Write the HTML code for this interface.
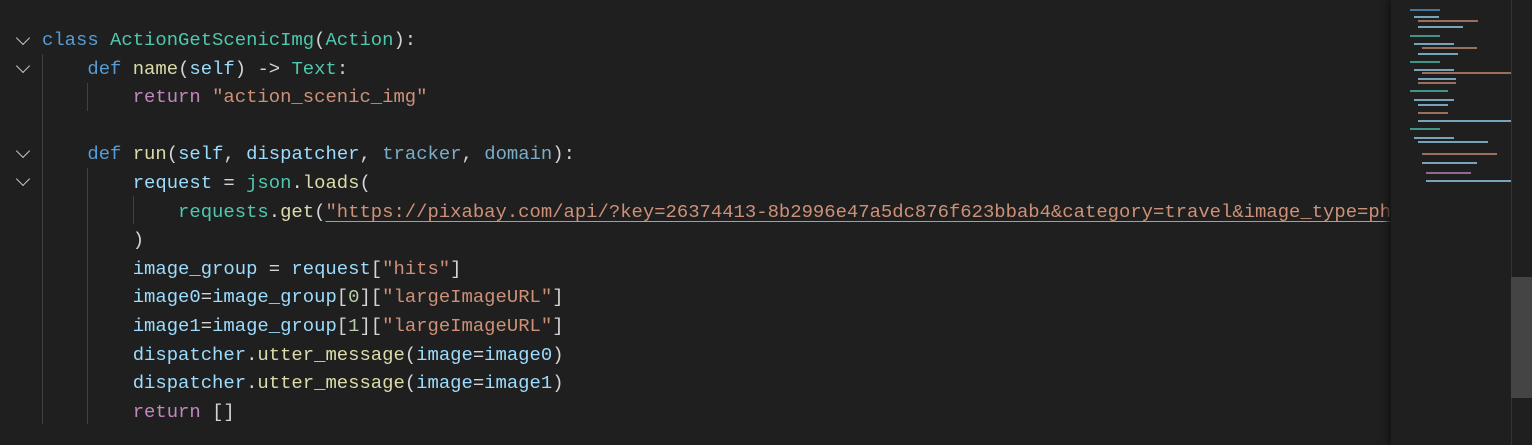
<!DOCTYPE html>
<html><head><meta charset="utf-8"><style>
body{margin:0;width:1532px;height:445px;background:#1f1f1f;overflow:hidden;position:relative;font-family:"Liberation Mono",monospace;}
.code{position:absolute;left:42px;top:26px;font-size:18.9px;line-height:28.6px;white-space:pre;color:#d4d4d4;}
.k{color:#569cd6}.c{color:#4ec9b0}.f{color:#dcdcaa}.v{color:#9cdcfe}.p{color:#9cdcfe;opacity:.75}.r{color:#c586c0}.s{color:#ce9178}.n{color:#b5cea8}
.u{text-decoration:underline;text-decoration-color:#ce9178;text-underline-offset:4px}
.chev{position:absolute;left:18px;width:9px;height:9px;border-right:1.6px solid #c5c5c5;border-bottom:1.6px solid #c5c5c5;transform:rotate(45deg)}
.g{position:absolute;width:1px;background:#404040}
.mini{position:absolute;left:1391px;top:0;width:120px;height:445px;background:#1f1f1f;box-shadow:-4px 0 6px #141414}
.mb{position:absolute;height:2px;opacity:.7}
.sb{position:absolute;left:1511px;top:0;width:21px;height:445px;background:#1f1f1f;border-left:1px solid #333}
.th{position:absolute;left:1511px;top:277px;width:21px;height:121px;background:#444}
</style></head><body>
<div class="chev" style="top:33px"></div>
<div class="chev" style="top:61px"></div>
<div class="chev" style="top:146px"></div>
<div class="chev" style="top:174px"></div>
<div class="g" style="left:42px;top:54px;height:370px"></div>
<div class="g" style="left:87px;top:83px;height:28px"></div>
<div class="g" style="left:87px;top:168px;height:256px"></div>
<div class="g" style="left:133px;top:196px;height:28px"></div>
<div class="code"><span class="k">class</span> <span class="c">ActionGetScenicImg</span>(<span class="c">Action</span>):
    <span class="k">def</span> <span class="f">name</span>(<span class="v">self</span>) -&gt; <span class="c">Text</span>:
        <span class="r">return</span> <span class="s">"action_scenic_img"</span>

    <span class="k">def</span> <span class="f">run</span>(<span class="v">self</span>, <span class="v">dispatcher</span>, <span class="p">tracker</span>, <span class="p">domain</span>):
        <span class="v">request</span> = <span class="c">json</span>.<span class="f">loads</span>(
            <span class="c">requests</span>.<span class="f">get</span>(<span class="s u">"https://pixabay.com/api/?key=26374413-8b2996e47a5dc876f623bbab4&amp;category=travel&amp;image_type=photo&amp;per_page=3"</span>
        )
        <span class="v">image_group</span> = <span class="v">request</span>[<span class="s">"hits"</span>]
        <span class="v">image0</span>=<span class="v">image_group</span>[<span class="n">0</span>][<span class="s">"largeImageURL"</span>]
        <span class="v">image1</span>=<span class="v">image_group</span>[<span class="n">1</span>][<span class="s">"largeImageURL"</span>]
        <span class="v">dispatcher</span>.<span class="f">utter_message</span>(<span class="v">image</span>=<span class="v">image0</span>)
        <span class="v">dispatcher</span>.<span class="f">utter_message</span>(<span class="v">image</span>=<span class="v">image1</span>)
        <span class="r">return</span> []</div>
<div class="mini">
<div class="mb" style="left:19px;top:9px;width:30px;background:#569cd6"></div>
<div class="mb" style="left:23px;top:16px;width:25px;background:#9cdcfe"></div>
<div class="mb" style="left:27px;top:20px;width:60px;background:#ce9178"></div>
<div class="mb" style="left:27px;top:26px;width:45px;background:#9cdcfe"></div>
<div class="mb" style="left:19px;top:35px;width:30px;background:#4ec9b0"></div>
<div class="mb" style="left:23px;top:43px;width:40px;background:#9cdcfe"></div>
<div class="mb" style="left:31px;top:47px;width:55px;background:#ce9178"></div>
<div class="mb" style="left:27px;top:53px;width:40px;background:#9cdcfe"></div>
<div class="mb" style="left:19px;top:61px;width:30px;background:#4ec9b0"></div>
<div class="mb" style="left:23px;top:69px;width:40px;background:#9cdcfe"></div>
<div class="mb" style="left:31px;top:72px;width:100px;background:#ce9178"></div>
<div class="mb" style="left:27px;top:78px;width:38px;background:#9cdcfe"></div>
<div class="mb" style="left:27px;top:82px;width:38px;background:#ce9178"></div>
<div class="mb" style="left:19px;top:90px;width:38px;background:#4ec9b0"></div>
<div class="mb" style="left:23px;top:99px;width:40px;background:#9cdcfe"></div>
<div class="mb" style="left:27px;top:104px;width:30px;background:#9cdcfe"></div>
<div class="mb" style="left:27px;top:112px;width:30px;background:#ce9178"></div>
<div class="mb" style="left:27px;top:120px;width:100px;background:#9cdcfe"></div>
<div class="mb" style="left:19px;top:128px;width:30px;background:#4ec9b0"></div>
<div class="mb" style="left:23px;top:137px;width:40px;background:#9cdcfe"></div>
<div class="mb" style="left:27px;top:141px;width:70px;background:#9cdcfe"></div>
<div class="mb" style="left:31px;top:153px;width:75px;background:#ce9178"></div>
<div class="mb" style="left:31px;top:162px;width:55px;background:#9cdcfe"></div>
<div class="mb" style="left:35px;top:172px;width:45px;background:#c586c0"></div>
<div class="mb" style="left:35px;top:180px;width:100px;background:#9cdcfe"></div>
</div>
<div class="sb"></div>
<div class="th"></div>
</body></html>
